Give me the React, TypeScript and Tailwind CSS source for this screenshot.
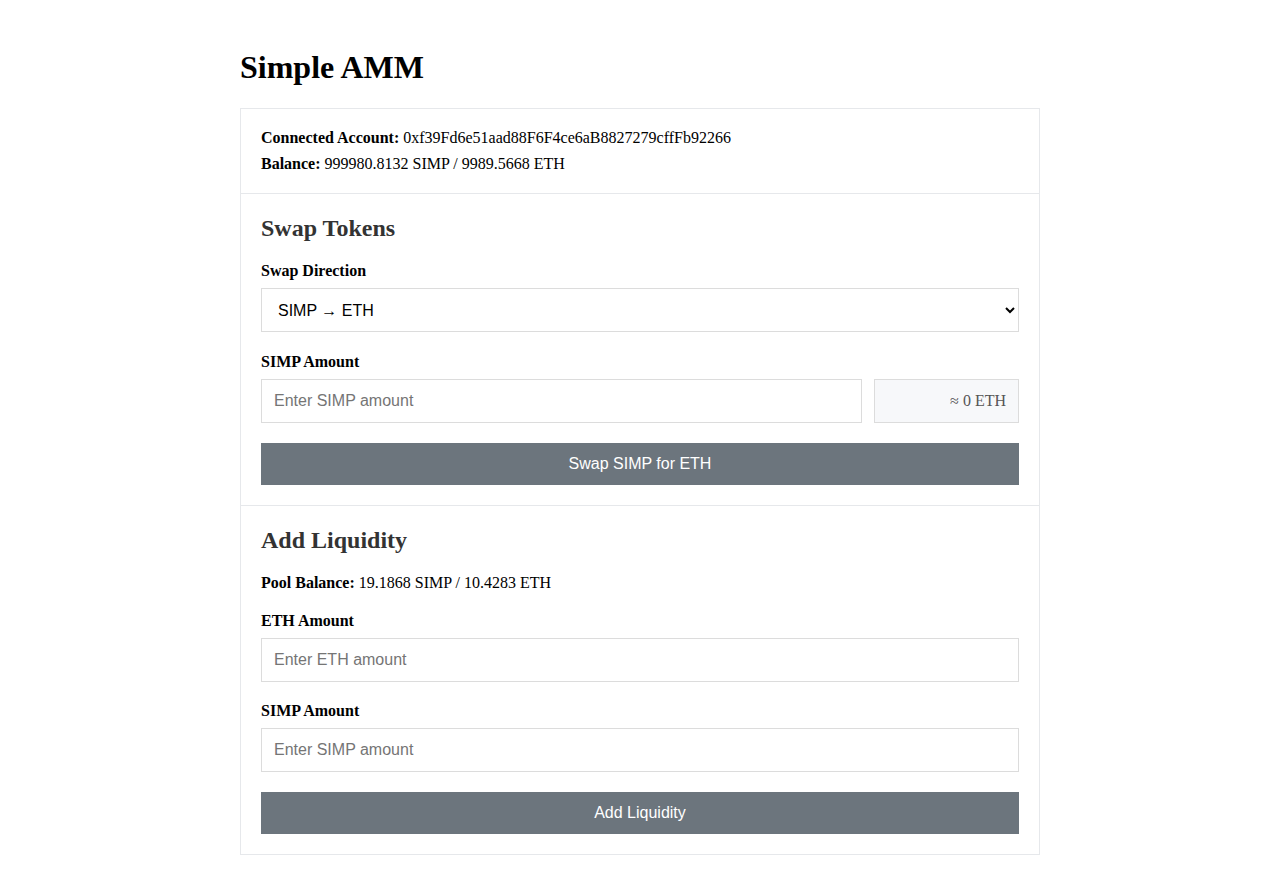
import { useState } from "react";

const serif = "font-['Liberation_Serif','Times_New_Roman',serif]";
const sans = "font-['Liberation_Sans',Arial,sans-serif]";

function Field({
  label,
  className = "mb-[19px]",
  children,
}: {
  label: string;
  className?: string;
  children: React.ReactNode;
}) {
  return (
    <div className={className}>
      <label className="block font-bold text-base leading-5 mb-[7px]">{label}</label>
      {children}
    </div>
  );
}

const inputCls = `w-full h-11 border border-[#dcdcdc] bg-white px-3 text-base ${sans} text-black placeholder:text-[#757575] outline-none`;

export default function App() {
  const [direction, setDirection] = useState("simp-eth");
  const [swapAmount, setSwapAmount] = useState("");
  const [ethAmount, setEthAmount] = useState("");
  const [simpAmount, setSimpAmount] = useState("");

  return (
    <div className={`min-h-screen bg-white text-black ${serif}`}>
      <div className="w-[800px] mx-auto pt-[48px] pb-7">
        <h1 className="text-[32px] leading-[38px] font-bold mb-[22px]">Simple AMM</h1>

        <div className="border border-[#e6e8eb]">
          <div className="px-5 py-4 text-base leading-[26px]">
            <div>
              <b>Connected Account:</b> 0xf39Fd6e51aad88F6F4ce6aB8827279cffFb92266
            </div>
            <div>
              <b>Balance:</b> 999980.8132 SIMP / 9989.5668 ETH
            </div>
          </div>

          <div className="border-t border-[#e6e8eb] px-5 pt-5 pb-5">
            <h2 className="text-2xl leading-7 font-bold text-[#333] mb-[19px]">Swap Tokens</h2>
            <Field label="Swap Direction" className="mb-5">
              <select
                value={direction}
                onChange={(e) => setDirection(e.target.value)}
                className={`w-full h-11 border border-[#dcdcdc] bg-white pl-3 pr-2 text-base ${sans} text-black outline-none`}
              >
                <option value="simp-eth">SIMP → ETH</option>
                <option value="eth-simp">ETH → SIMP</option>
              </select>
            </Field>
            <div>
              <label className="block font-bold text-base leading-5 mb-[7px]">SIMP Amount</label>
              <div className="flex gap-3">
                <input
                  value={swapAmount}
                  onChange={(e) => setSwapAmount(e.target.value)}
                  placeholder="Enter SIMP amount"
                  className={`flex-1 h-11 border border-[#dcdcdc] bg-white px-3 text-base ${sans} text-black placeholder:text-[#757575] outline-none`}
                />
                <div className="w-[145px] h-11 border border-[#dcdcdc] bg-[#f7f8fa] px-3 flex items-center justify-end text-base text-[#555]">
                  ≈ 0 ETH
                </div>
              </div>
            </div>
            <button className={`mt-5 w-full h-[42px] bg-[#6c757d] text-white text-base ${sans}`}>
              Swap SIMP for ETH
            </button>
          </div>

          <div className="border-t border-[#e6e8eb] px-5 pt-5 pb-5">
            <h2 className="text-2xl leading-7 font-bold text-[#333] mb-[19px]">Add Liquidity</h2>
            <div className="text-base leading-5 mb-[18px]">
              <b>Pool Balance:</b> 19.1868 SIMP / 10.4283 ETH
            </div>
            <Field label="ETH Amount">
              <input
                value={ethAmount}
                onChange={(e) => setEthAmount(e.target.value)}
                placeholder="Enter ETH amount"
                className={inputCls}
              />
            </Field>
            <div>
              <label className="block font-bold text-base leading-5 mb-[7px]">SIMP Amount</label>
              <input
                value={simpAmount}
                onChange={(e) => setSimpAmount(e.target.value)}
                placeholder="Enter SIMP amount"
                className={inputCls}
              />
            </div>
            <button className={`mt-5 w-full h-[42px] bg-[#6c757d] text-white text-base ${sans}`}>
              Add Liquidity
            </button>
          </div>
        </div>
      </div>
    </div>
  );
}
